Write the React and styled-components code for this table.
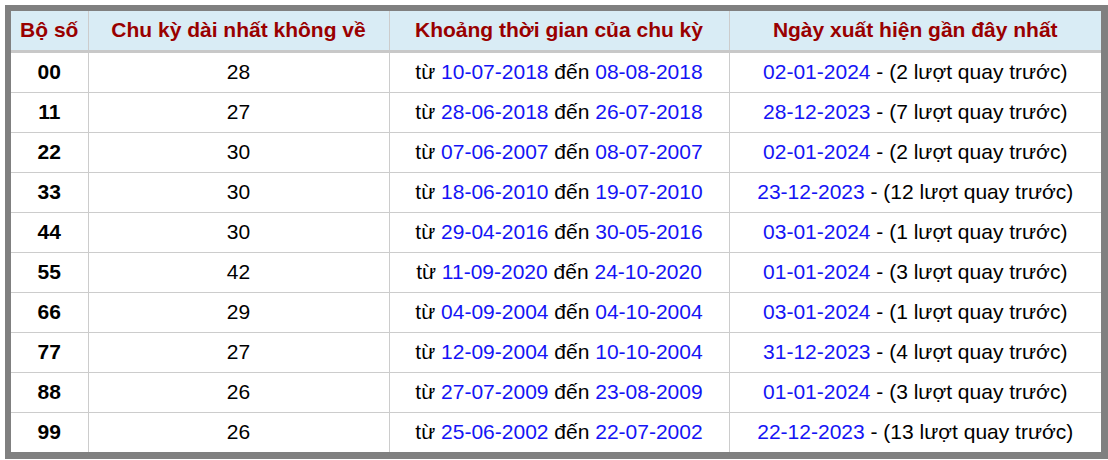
import React from "react";
import styled, { createGlobalStyle } from "styled-components";

const Global = createGlobalStyle`
    body {
        margin: 0;
        background: #fff;
        font-family: "Liberation Sans", Arial, sans-serif;
    }
`;

const Frame = styled.div`
    margin: 5px 0 0 5px;
    width: 1103px;
    border: 6px solid #808080;
    border-right-width: 7px;
    border-bottom-width: 7px;
    box-sizing: border-box;
    background: #fff;
`;

const Table = styled.table`
    width: 100%;
    border-collapse: collapse;
    table-layout: fixed;
    font-size: 21px;
`;

const Head = styled.th`
    height: 37px;
    padding: 0 0 2px;
    background: #d9ecf5;
    color: #990000;
    font-weight: bold;
    font-size: 21px;
    text-align: center;
    white-space: nowrap;
    border-left: 1px solid #cccccc;
    border-bottom: 3px solid #c8c8c8;
    &:first-child { border-left: none; }
`;

const Row = styled.tr`
    &:last-child td { border-bottom: none; }
`;

const Cell = styled.td`
    height: 37px;
    padding: 0 0 2px;
    text-align: center;
    white-space: nowrap;
    color: #000;
    font-weight: ${(p) => (p.$bold ? "bold" : "normal")};
    border-left: 1px solid #cccccc;
    border-bottom: 1px solid #cccccc;
    &:first-child { border-left: none; }
`;

const Date = styled.span`
    color: #1414f5;
`;

const rows = [
    ["00", 28, "10-07-2018", "08-08-2018", "02-01-2024", 2],
    ["11", 27, "28-06-2018", "26-07-2018", "28-12-2023", 7],
    ["22", 30, "07-06-2007", "08-07-2007", "02-01-2024", 2],
    ["33", 30, "18-06-2010", "19-07-2010", "23-12-2023", 12],
    ["44", 30, "29-04-2016", "30-05-2016", "03-01-2024", 1],
    ["55", 42, "11-09-2020", "24-10-2020", "01-01-2024", 3],
    ["66", 29, "04-09-2004", "04-10-2004", "03-01-2024", 1],
    ["77", 27, "12-09-2004", "10-10-2004", "31-12-2023", 4],
    ["88", 26, "27-07-2009", "23-08-2009", "01-01-2024", 3],
    ["99", 26, "25-06-2002", "22-07-2002", "22-12-2023", 13],
];

export default function App() {
    return (
        <>
            <Global />
            <Frame>
                <Table>
                    <colgroup>
                        <col style={{ width: 77 }} />
                        <col style={{ width: 301 }} />
                        <col style={{ width: 340 }} />
                        <col />
                    </colgroup>
                    <thead>
                        <tr>
                            <Head>Bộ số</Head>
                            <Head>Chu kỳ dài nhất không về</Head>
                            <Head>Khoảng thời gian của chu kỳ</Head>
                            <Head>Ngày xuất hiện gần đây nhất</Head>
                        </tr>
                    </thead>
                    <tbody>
                        {rows.map((r) => (
                            <Row key={r[0]}>
                                <Cell $bold>{r[0]}</Cell>
                                <Cell>{r[1]}</Cell>
                                <Cell>
                                    từ <Date>{r[2]}</Date> đến <Date>{r[3]}</Date>
                                </Cell>
                                <Cell>
                                    <Date>{r[4]}</Date> - ({r[5]} lượt quay trước)
                                </Cell>
                            </Row>
                        ))}
                    </tbody>
                </Table>
            </Frame>
        </>
    );
}
